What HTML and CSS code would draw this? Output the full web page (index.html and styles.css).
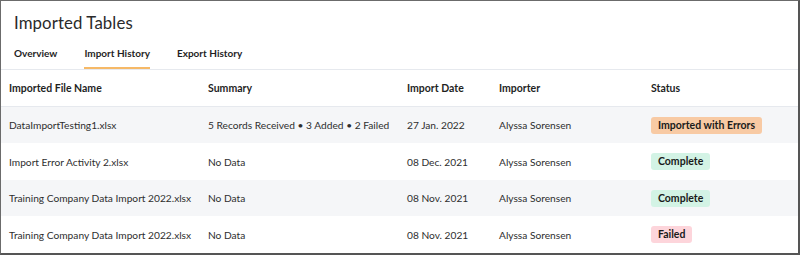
FILE: index.html
```html
<!DOCTYPE html>
<html>
<head>
<meta charset="utf-8">
<link rel="stylesheet" href="styles.css">
</head>
<body>
<div class="panel">
  <h1 class="title">Imported Tables</h1>
  <nav class="tabs">
    <span class="tab">Overview</span>
    <span class="tab active">Import History</span>
    <span class="tab">Export History</span>
  </nav>
  <div class="table">
    <div class="row head">
      <div>Imported File Name</div>
      <div>Summary</div>
      <div>Import Date</div>
      <div>Importer</div>
      <div>Status</div>
    </div>
    <div class="row shade">
      <div>DataImportTesting1.xlsx</div>
      <div>5 Records Received • 3 Added • 2 Failed</div>
      <div>27 Jan. 2022</div>
      <div>Alyssa Sorensen</div>
      <div><span class="badge warn">Imported with Errors</span></div>
    </div>
    <div class="row tall">
      <div>Import Error Activity 2.xlsx</div>
      <div>No Data</div>
      <div>08 Dec. 2021</div>
      <div>Alyssa Sorensen</div>
      <div><span class="badge ok">Complete</span></div>
    </div>
    <div class="row shade">
      <div>Training Company Data Import 2022.xlsx</div>
      <div>No Data</div>
      <div>08 Nov. 2021</div>
      <div>Alyssa Sorensen</div>
      <div><span class="badge ok">Complete</span></div>
    </div>
    <div class="row tall">
      <div>Training Company Data Import 2022.xlsx</div>
      <div>No Data</div>
      <div>08 Nov. 2021</div>
      <div>Alyssa Sorensen</div>
      <div><span class="badge fail">Failed</span></div>
    </div>
  </div>
</div>
</body>
</html>
```

FILE: styles.css
```css
* { box-sizing: border-box; }
html, body { margin: 0; padding: 0; background: #fff; }
body {
  font-family: Lato, "Open Sans", "Noto Sans", sans-serif;
  color: #222;
}
.panel {
  width: 800px;
  height: 255px;
  border-top: 1px solid #6b6b6b;
  border-left: 1px solid #6b6b6b;
  border-right: 2px solid #555;
  border-bottom: 2px solid #555;
  overflow: hidden;
}
.title {
  margin: 0;
  padding: 12px 0 0 13px;
  font-size: 16.8px;
  line-height: 20px;
  font-weight: 400;
  color: #2a2a2a;
  letter-spacing: 0.1px;
}
.tabs {
  display: flex;
  gap: 27px;
  padding-left: 13px;
  margin-top: 13px;
  border-bottom: 1px solid #e6e9ee;
}
.tab {
  font-size: 10px;
  font-weight: 700;
  line-height: 14px;
  padding-bottom: 7px;
  border-bottom: 2px solid transparent;
  color: #1f1f1f;
  white-space: nowrap;
}
.tab.active { border-bottom-color: #f6b967; }
.table { display: flex; flex-direction: column; }
.row {
  display: grid;
  grid-template-columns: 199px 199px 92px 152px 1fr;
  align-items: center;
  padding-left: 8px;
  height: 36px;
  font-size: 10.2px;
  color: #2e2e2e;
  white-space: nowrap;
}
.row.tall { height: 37px; }
.row.head {
  height: 37px;
  font-size: 10.5px;
  font-weight: 700;
  color: #1f1f1f;
  border-bottom: 1px solid #e6e9ee;
}
.row.shade { background: #f5f6f8; }
.badge {
  display: inline-block;
  font-weight: 700;
  font-size: 10.5px;
  line-height: 17px;
  padding: 0 7px;
  border-radius: 3px;
  color: #1a1a1a;
}
.badge.warn { background: #f8caa4; }
.badge.ok { background: #d3f3e5; }
.badge.fail { background: #fdd5db; }
```
